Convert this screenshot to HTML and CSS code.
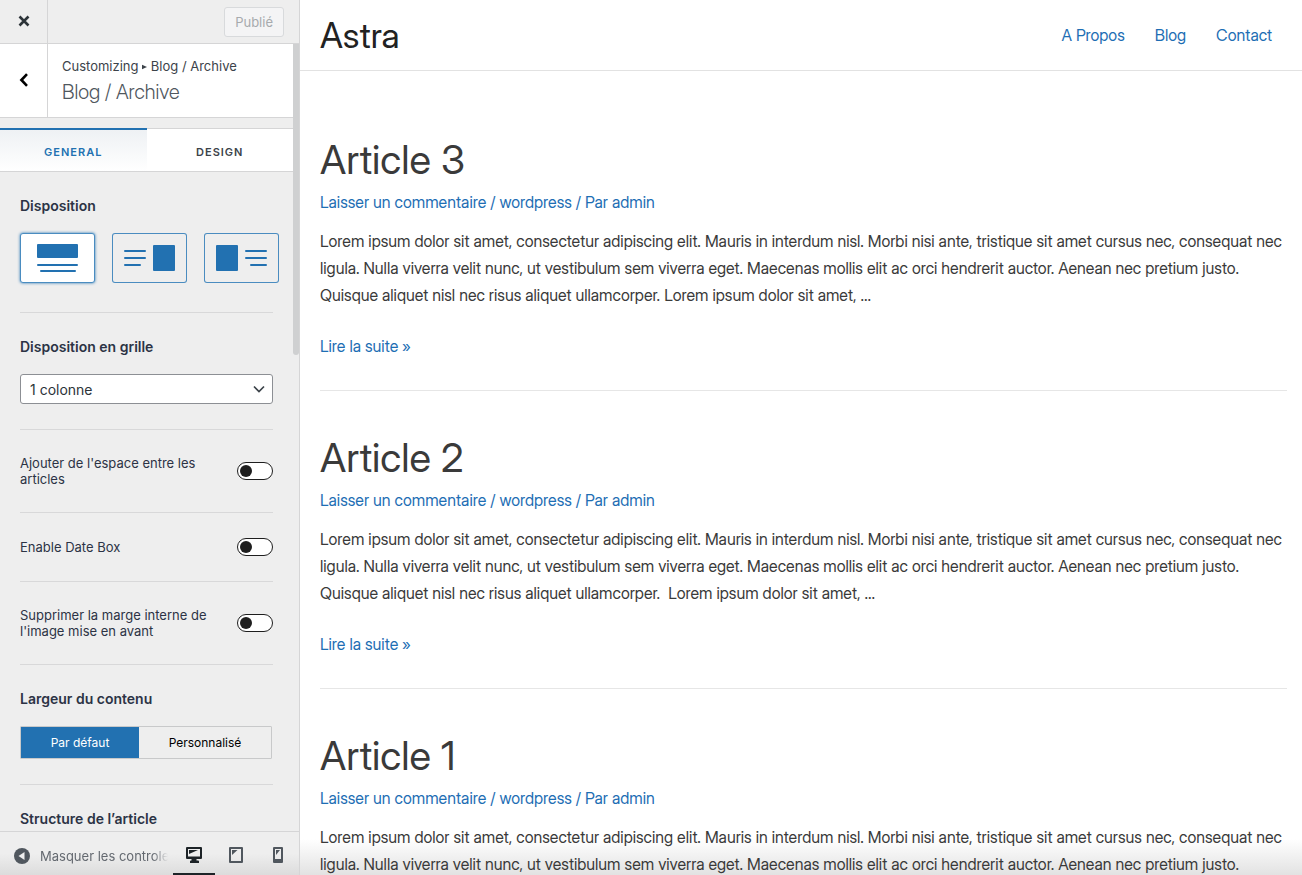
FILE: index.html
```html
<!DOCTYPE html>
<html lang="fr">
<head>
<meta charset="utf-8">
<title>Astra – Blog / Archive</title>
<meta name="viewport" content="width=device-width, initial-scale=1">
<link rel="stylesheet" href="styles.css">
</head>
<body class="customizer">
<aside class="sidebar">
  <header class="topbar">
    <button class="close" type="button" aria-label="Fermer">
      <svg width="12" height="12" viewBox="0 0 12 12"><path d="M1.500 1.500 10.500 10.500M10.500 1.500 1.500 10.500" stroke="#2c3338" stroke-width="2.600" fill="none"/></svg>
    </button>
    <button class="publish" type="button" disabled>Publié</button>
  </header>
  <div class="panel">
    <div class="section-head">
      <button class="back" type="button" aria-label="Retour">
        <svg width="10" height="14" viewBox="0 0 10 14"><path d="M8 1.200 2.400 7 8 12.800" stroke="#000" stroke-width="2.600" fill="none"/></svg>
      </button>
      <div class="section-title">
        <p class="crumbs">Customizing <svg class="crumb-arrow" width="5" height="6" viewBox="0 0 5 6"><path d="M0 .8 5 3 0 5.200z" fill="#3c434a"/></svg> Blog / Archive</p>
        <h1 class="heading">Blog / Archive</h1>
      </div>
    </div>
    <nav class="tabs">
      <button class="tab tab-active" type="button">GENERAL</button>
      <button class="tab" type="button">DESIGN</button>
    </nav>
    <div class="controls">
      <section class="control control-first">
        <h2 class="control-title">Disposition</h2>
        <div class="layouts">
          <button class="layout layout-on" type="button" aria-label="Image au-dessus">
            <svg width="75" height="50" viewBox="0 0 75 50" fill="#2271b1"><rect x="17" y="11" width="41" height="14" rx="1"/><rect x="17" y="31" width="41" height="2" rx="1"/><rect x="20" y="37" width="36" height="2" rx="1"/></svg>
          </button>
          <button class="layout" type="button" aria-label="Image à droite">
            <svg width="75" height="50" viewBox="0 0 75 50" fill="#2271b1"><rect x="12" y="17" width="22" height="2" rx="1"/><rect x="12" y="24" width="22" height="2" rx="1"/><rect x="12" y="31" width="17" height="2" rx="1"/><rect x="41" y="12" width="22" height="26" rx="1"/></svg>
          </button>
          <button class="layout" type="button" aria-label="Image à gauche">
            <svg width="75" height="50" viewBox="0 0 75 50" fill="#2271b1"><rect x="12" y="12" width="22" height="26" rx="1"/><rect x="41" y="17" width="22" height="2" rx="1"/><rect x="41" y="24" width="22" height="2" rx="1"/><rect x="46" y="31" width="17" height="2" rx="1"/></svg>
          </button>
        </div>
      </section>
      <section class="control">
        <label class="control-title" for="grid">Disposition en grille</label>
        <div class="select-wrap">
          <select id="grid" class="select"><option>1 colonne</option><option>2 colonnes</option></select>
          <svg class="chevron" width="12" height="8" viewBox="0 0 12 8"><path d="M1 1.500 6 6.500 11 1.500" stroke="#3c434a" stroke-width="1.700" fill="none"/></svg>
        </div>
      </section>
      <section class="control row">
        <label class="label" for="space">Ajouter de l'espace entre les articles</label>
        <input class="toggle" id="space" type="checkbox">
      </section>
      <section class="control row">
        <label class="label" for="datebox">Enable Date Box</label>
        <input class="toggle" id="datebox" type="checkbox">
      </section>
      <section class="control row">
        <label class="label" for="margin">Supprimer la marge interne de l'image mise en avant</label>
        <input class="toggle" id="margin" type="checkbox">
      </section>
      <section class="control">
        <h2 class="control-title">Largeur du contenu</h2>
        <div class="segmented">
          <button class="segment segment-on" type="button">Par défaut</button>
          <button class="segment" type="button">Personnalisé</button>
        </div>
      </section>
      <section class="control">
        <h2 class="control-title">Structure de l’article</h2>
      </section>
    </div>
    <div class="scrollbar"></div>
  </div>
  <footer class="bottombar">
    <button class="collapse" type="button">
      <svg class="collapse-icon" width="16" height="16" viewBox="0 0 16 16"><circle cx="8" cy="8" r="8" fill="#50575e"/><path d="M10.500 4v8L4.500 8z" fill="#eee"/></svg>
      <span class="collapse-text">Masquer les controles</span>
    </button>
    <div class="devices">
      <button class="device device-on" type="button" aria-label="Bureau">
        <svg width="16" height="16" viewBox="0 0 16 16"><path fill="#1d2327" fill-rule="evenodd" d="M1 0h14q1 0 1 1v10q0 1-1 1h-4.500v1.500H12q1 0 1 1V16H4v-1.500q0-1 1-1h.5V12H1q-1 0-1-1V1q0-1 1-1zM2 2v7.500h12V2z"/><path d="M3 3h9L3 7z" fill="#1d2327"/></svg>
      </button>
      <button class="device" type="button" aria-label="Tablette">
        <svg width="14" height="16" viewBox="0 0 14 16"><path fill="#50575e" fill-rule="evenodd" d="M1 0h12q1 0 1 1v14q0 1-1 1H1q-1 0-1-1V1q0-1 1-1zM2 2v12h10V2z"/><path d="M3 3h5.500L3 8z" fill="#50575e"/></svg>
      </button>
      <button class="device" type="button" aria-label="Mobile">
        <svg width="10" height="16" viewBox="0 0 10 16"><path fill="#50575e" fill-rule="evenodd" d="M1 0h8q1 0 1 1v14q0 1-1 1H1q-1 0-1-1V1q0-1 1-1zM2 2v10h6V2z"/><path d="M3 3h4L3 8z" fill="#50575e"/></svg>
      </button>
    </div>
  </footer>
</aside>
<div class="preview">
  <header class="site-header">
    <a class="brand" href="#">Astra</a>
    <nav class="menu"><a class="link" href="#">A Propos</a><a class="link" href="#">Blog</a><a class="link" href="#">Contact</a></nav>
  </header>
  <main class="posts">
    <article class="post">
      <h2 class="post-title">Article 3</h2>
      <p class="meta"><a class="link" href="#">Laisser un commentaire</a> / <a class="link" href="#">wordpress</a> / <a class="link" href="#">Par admin</a></p>
      <p class="excerpt">Lorem ipsum dolor sit amet, consectetur adipiscing elit. Mauris in interdum nisl. Morbi nisi ante, tristique sit amet cursus nec, consequat nec ligula. Nulla viverra velit nunc, ut vestibulum sem viverra eget. Maecenas mollis elit ac orci hendrerit auctor. Aenean nec pretium justo. Quisque aliquet nisl nec risus aliquet ullamcorper. Lorem ipsum dolor sit amet, …</p>
      <p class="more"><a class="link" href="#">Lire la suite »</a></p>
    </article>
    <article class="post">
      <h2 class="post-title">Article 2</h2>
      <p class="meta"><a class="link" href="#">Laisser un commentaire</a> / <a class="link" href="#">wordpress</a> / <a class="link" href="#">Par admin</a></p>
      <p class="excerpt">Lorem ipsum dolor sit amet, consectetur adipiscing elit. Mauris in interdum nisl. Morbi nisi ante, tristique sit amet cursus nec, consequat nec ligula. Nulla viverra velit nunc, ut vestibulum sem viverra eget. Maecenas mollis elit ac orci hendrerit auctor. Aenean nec pretium justo. Quisque aliquet nisl nec risus aliquet ullamcorper.&nbsp; Lorem ipsum dolor sit amet, …</p>
      <p class="more"><a class="link" href="#">Lire la suite »</a></p>
    </article>
    <article class="post">
      <h2 class="post-title">Article 1</h2>
      <p class="meta"><a class="link" href="#">Laisser un commentaire</a> / <a class="link" href="#">wordpress</a> / <a class="link" href="#">Par admin</a></p>
      <p class="excerpt">Lorem ipsum dolor sit amet, consectetur adipiscing elit. Mauris in interdum nisl. Morbi nisi ante, tristique sit amet cursus nec, consequat nec ligula. Nulla viverra velit nunc, ut vestibulum sem viverra eget. Maecenas mollis elit ac orci hendrerit auctor. Aenean nec pretium justo.</p>
    </article>
  </main>
</div>
</body>
</html>
```
FILE: styles.css
```css
* { box-sizing: border-box; }
h1, h2, p { margin: 0; font-weight: 400; }
button { margin: 0; padding: 0; border: 0; background: none; font: inherit; color: inherit; }
svg { display: block; }

.customizer {
  margin: 0;
  display: flex;
  height: 100vh;
  overflow: hidden;
  background: #fff;
  font-family: Inter, "Liberation Sans", sans-serif;
  font-size: 13px;
  color: #3c434a;
}

/* Sidebar */
.sidebar {
  flex: 0 0 300px;
  display: flex;
  flex-direction: column;
  background: #eee;
  border-right: 1px solid #d5d5d6;
}
.topbar {
  flex: none;
  height: 44px;
  display: flex;
  justify-content: space-between;
  align-items: center;
  padding-right: 15px;
  border-bottom: 1px solid #d5d5d6;
}
.close, .back {
  width: 48px;
  display: flex;
  align-items: center;
  justify-content: center;
  align-self: stretch;
  padding-bottom: 2px;
  border-right: 1px solid #d5d5d6;
}
.publish {
  height: 30px;
  padding: 0 10px;
  border: 1px solid #d8dadc;
  border-radius: 3px;
  background: #f4f4f5;
  color: #a7aaad;
}
.panel {
  flex: 1;
  min-height: 0;
  position: relative;
  overflow: hidden;
  padding-right: 6px;
}
.section-head {
  display: flex;
  height: 74px;
  background: #fff;
  border-bottom: 1px solid #d5d5d6;
}
.section-title { padding: 12px 14px 0; }
.crumbs { line-height: 20px; font-size: 13px; white-space: nowrap; }
.crumb-arrow { display: inline-block; vertical-align: 1px; }
.heading {
  font-family: "Inter Display", Inter, sans-serif;
  font-size: 20px;
  line-height: 32px;
  font-weight: 300;
  color: #50575e;
}
.tabs {
  display: flex;
  margin-top: 10px;
  height: 44px;
  background: #fff;
  border-bottom: 1px solid #d5d5d6;
}
.tab {
  flex: 1;
  padding-top: 4px;
  border-top: 1px solid #d5d5d6;
  font-size: 11px;
  font-weight: 600;
  letter-spacing: 1px;
}
.tab-active {
  padding-top: 3px;
  border-top: 2px solid #2271b1;
  background: linear-gradient(#eef1f4, #fff);
  color: #2271b1;
}
.controls { padding: 0 20px; }
.control { padding: 24px 0 25px; border-bottom: 1px solid #d8d8d9; }
.control-first { padding-bottom: 29px; }
.control-title {
  display: block;
  margin-bottom: 17px;
  font-size: 14px;
  line-height: 20px;
  font-weight: 600;
  color: #2c3345;
}
.layouts { display: flex; gap: 17px; margin-right: -6px; }
.layout {
  flex: none;
  width: 75px;
  height: 50px;
  border-radius: 3px;
  box-shadow: inset 0 0 0 1px #4a8cc0;
}
.layout-on { background: #fff; box-shadow: inset 0 0 0 1px #4a8cc0, 0 0 3px #2271b1; }
.select-wrap { display: grid; align-items: center; }
.select {
  grid-area: 1 / 1;
  width: 100%;
  height: 30px;
  padding: 0 9px;
  appearance: none;
  border: 1px solid #8c8f94;
  border-radius: 3px;
  background: #fff;
  font: inherit;
  font-size: 14px;
  color: #2c3338;
}
.chevron { grid-area: 1 / 1; justify-self: end; margin-right: 8px; pointer-events: none; }
.row { display: flex; align-items: center; justify-content: space-between; gap: 24px; padding: 25px 0; }
.label { line-height: 16px; color: #2c3345; }
.toggle {
  flex: none;
  appearance: none;
  display: flex;
  align-items: center;
  width: 36px;
  height: 18px;
  margin: 0;
  padding-left: 2px;
  border: 1px solid #1e1e1e;
  border-radius: 9px;
  background: #fff;
}
.toggle::before { content: ""; width: 12px; height: 12px; border-radius: 50%; background: #1e1e1e; }
.segmented { display: flex; border: 1px solid #c8c9ca; margin-right: 1px; border-radius: 1px; }
.segment { flex: 0 0 132px; height: 31px; font-size: 12px; color: #000; }
.segment-on { flex: 1; background: #2271b1; color: #fff; }
.scrollbar {
  position: absolute;
  top: 0;
  right: 0;
  width: 6px;
  height: 311px;
  border-radius: 0 0 3px 3px;
  background: #cfd0d1;
}
.bottombar {
  flex: none;
  display: flex;
  justify-content: space-between;
  height: 44px;
  border-top: 1px solid #d5d5d6;
  background: linear-gradient(#eee 50%, #dcdcdc);
}
.collapse { display: flex; align-items: center; gap: 10px; width: 168px; padding: 4px 0 0 14px; color: #646970; overflow: hidden; }
.collapse-icon { flex: none; }
.collapse-text {
  white-space: nowrap;
  overflow: hidden;
  mask-image: linear-gradient(90deg, #000 88%, transparent);
}
.devices { display: flex; }
.device { width: 42px; display: flex; justify-content: center; align-items: center; padding-top: 4px; border-bottom: 2px solid transparent; }
.device-on { border-bottom-color: #1d2327; }

/* Site preview */
.preview {
  flex: 1;
  min-width: 0;
  overflow: hidden;
  background: linear-gradient(to top, #e2e2e2, #fff 36px);
  font-family: "Inter Display", Inter, sans-serif;
  font-size: 16px;
  line-height: 27px;
  color: #3a3a3a;
}
.site-header {
  display: flex;
  align-items: center;
  justify-content: space-between;
  height: 71px;
  padding: 0 30px 0 20px;
  border-bottom: 1px solid #e2e2e2;
}
.brand { font-size: 35px; color: #222; text-decoration: none; }
.menu { display: flex; gap: 30px; }
.link { color: #1e6eb4; text-decoration: none; }
.posts { padding: 22px 15px 0 20px; }
.post { padding: 41px 0 30px; border-bottom: 1px solid #e6e6e6; }
.post-title { font-size: 40px; line-height: 52px; }
.meta { margin: 3px 0 12px; color: #1e6eb4; }
.more { margin-top: 24px; }
```
